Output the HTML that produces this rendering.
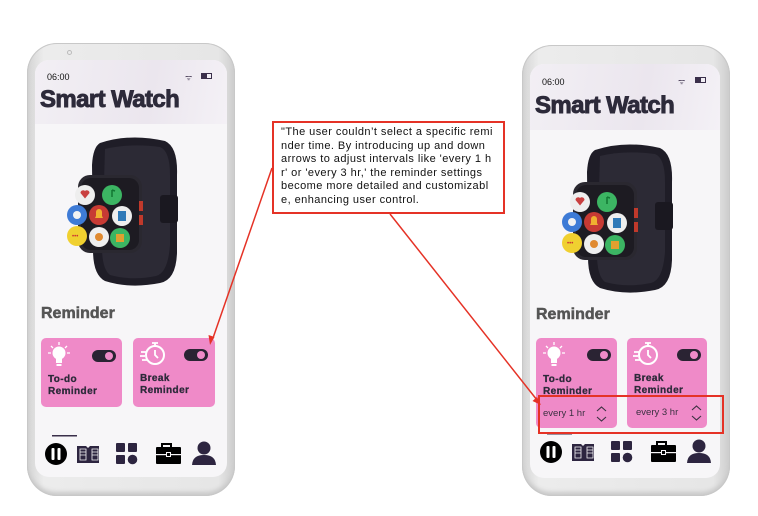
<!DOCTYPE html>
<html><head><meta charset="utf-8"><style>
*{margin:0;padding:0;box-sizing:border-box}
body{width:758px;height:516px;background:#fff;position:relative;overflow:hidden;font-family:"Liberation Sans",sans-serif}
.a{position:absolute}
.outer{border-radius:30px;background:linear-gradient(90deg,#d3d3d3,#ececec 8%,#e6e6e6 92%,#cdcdcd);box-shadow:inset 0 0 0 1px #c8c8c8,inset 0 -4px 4px #c9c9c9}
.screen{border-radius:14px;background:#f7f6f8;overflow:hidden}
.hdr{background:linear-gradient(100deg,#f2eff4,#ebe6ee 60%,#f4f1f6)}
.time{font-size:9px;color:#111}
.title{font-size:24px;font-weight:bold;color:#2d2a3a;letter-spacing:-0.6px;-webkit-text-stroke:0.9px #2d2a3a}
.rem{font-size:16px;font-weight:bold;color:#555;-webkit-text-stroke:0.5px #555}
.card{background:#ef8ac8;border-radius:5px}
.ct{font-size:10px;font-weight:bold;color:#2d2a3a;line-height:12px;letter-spacing:0.4px;-webkit-text-stroke:0.3px #2d2a3a}
.tog{width:24px;height:12px;border-radius:6px;background:#2a2333}
.tog:after{content:"";position:absolute;right:3px;top:2px;width:8px;height:8px;border-radius:50%;background:#ef8ac8}
.ev{font-size:9.5px;color:#3a3040}
.note{border:2px solid #e53226;background:#fff;font-family:"Liberation Sans",sans-serif;font-size:11px;letter-spacing:0.45px;line-height:13.6px;color:#111;padding:3px 0 0 7px;white-space:nowrap;overflow:hidden}
</style></head><body>
<svg width="0" height="0" style="position:absolute">
<defs>
<symbol id="watch" viewBox="0 0 130 155">
<path d="M40 8 Q70 -2 105 6 Q118 12 117 40 L117 118 Q116 145 100 148 Q70 154 45 146 Q33 140 33 115 L32 30 Q33 12 40 8Z" fill="#1f1d27"/>
<path d="M45 14 Q70 8 100 12 Q110 16 110 40 L110 110 Q108 138 96 141 Q72 146 50 140 Q42 134 42 112 Z" fill="#2c2a35"/>
<rect x="100" y="60" width="18" height="28" rx="3" fill="#1a1820"/>
<rect x="18" y="40" width="64" height="78" rx="12" fill="#2a2830"/>
<rect x="21" y="43" width="58" height="72" rx="10" fill="#1d1b22"/>
<rect x="79" y="66" width="4" height="10" fill="#c0392b"/><rect x="79" y="80" width="4" height="10" fill="#c0392b"/>
<circle cx="25" cy="60" r="10" fill="#eee"/><path d="M20.5 58a2.7 2.7 0 0 1 4.5-2a2.7 2.7 0 0 1 4.5 2l-4.5 5.5z" fill="#c94040"/>
<circle cx="52" cy="60" r="10" fill="#3cb563"/><path d="M52 55v7M52 55l3 1" stroke="#173" stroke-width="1.5" fill="none"/>
<circle cx="17" cy="80" r="10" fill="#3e7bd6"/><circle cx="17" cy="80" r="4" fill="#f2f2f2"/>
<circle cx="39" cy="80" r="10" fill="#c73a34"/><path d="M35 83h8l-1-2v-4a3 3 0 0 0-6 0v4z" fill="#f0b030"/>
<circle cx="62" cy="81" r="10" fill="#eee"/><rect x="58" y="76" width="8" height="10" fill="#2f7ab8"/>
<circle cx="17" cy="101" r="10" fill="#f0d030"/><text x="12" y="103" font-size="6" fill="#c33">•••</text>
<circle cx="39" cy="102" r="10" fill="#eee"/><circle cx="39" cy="102" r="4" fill="#e08a30"/>
<circle cx="60" cy="103" r="10" fill="#3cb563"/><rect x="56" y="99" width="8" height="8" fill="#e0a030"/>
</symbol>
<symbol id="nav" viewBox="0 0 190 30">
<rect x="17" y="0" width="25" height="1.5" fill="#3a2f4a"/>
<circle cx="21" cy="19" r="11" fill="#000"/><rect x="16.5" y="13" width="3" height="12" rx="1" fill="#fff"/><rect x="22.5" y="13" width="3" height="12" rx="1" fill="#fff"/>
<path d="M42 11h9l2 2 2-2h9v17h-22z" fill="#2d2540"/><path d="M45 14h6v11h-6zM57 14h6v11h-6z" fill="none" stroke="#f7f6f8" stroke-width="0.8"/><path d="M45 17h6M45 20h6M57 17h6M57 20h6" stroke="#f7f6f8" stroke-width="0.8"/>
<rect x="81" y="8" width="9" height="9" rx="1" fill="#2d2540"/><rect x="93" y="8" width="9" height="9" rx="1" fill="#2d2540"/><rect x="81" y="20" width="9" height="9" rx="1" fill="#2d2540"/><circle cx="97.5" cy="24.5" r="4.8" fill="#2d2540"/>
<path d="M127 12v-3h9v3" stroke="#000" stroke-width="2" fill="none"/><rect x="121" y="12" width="25" height="17" rx="1" fill="#000"/><rect x="121" y="19" width="25" height="1.2" fill="#f7f6f8"/><rect x="131" y="17" width="5" height="5" fill="#f7f6f8"/><rect x="132" y="18" width="3" height="3" fill="#000"/>
<circle cx="169" cy="13" r="6.5" fill="#2d2540"/><path d="M157 31q0-11 12-11q12 0 12 11z" fill="#2d2540"/>
</symbol>
<symbol id="bulb" viewBox="0 0 22 28"><circle cx="11" cy="12" r="6.5" fill="#fff"/><rect x="8" y="17" width="6" height="5" fill="#fff"/><rect x="8.5" y="23" width="5" height="2" fill="#fff"/><path d="M11 1v3M3 5l2 2M19 5l-2 2M0 12h3M19 12h3" stroke="#fff" stroke-width="1.3"/></symbol>
<symbol id="timer" viewBox="0 0 26 28"><circle cx="15" cy="15" r="9" fill="none" stroke="#fff" stroke-width="2"/><path d="M12 3h6M15 3v3M15 10v5l3 3M1 12h6M0 16h5M2 20h5" stroke="#fff" stroke-width="1.8" fill="none"/></symbol>
</defs></svg>

<!-- LEFT PHONE -->
<div class="a outer" style="left:27px;top:43px;width:208px;height:453px"></div>
<div class="a" style="left:67px;top:50px;width:5px;height:5px;border-radius:50%;border:1px solid #bbb"></div>
<div class="a screen" style="left:35px;top:60px;width:192px;height:417px">
 <div class="a hdr" style="left:0;top:0;width:192px;height:64px"></div>
</div>
<div class="a time" style="left:47px;top:72px">06:00</div>
<div class="a" style="left:185px;top:72px;font-size:8px;color:#3a2f4a">ᯤ</div>
<div class="a" style="left:201px;top:73px;width:11px;height:6px;border:1px solid #3a2f4a"><div style="width:5px;height:4px;background:#3a2f4a"></div></div>
<div class="a title" style="left:40px;top:86px">Smart Watch</div>
<svg class="a" style="left:60px;top:135px" width="130" height="155"><use href="#watch"/></svg>
<div class="a rem" style="left:41px;top:305px">Reminder</div>
<div class="a card" style="left:41px;top:338px;width:81px;height:69px"></div>
<div class="a card" style="left:133px;top:338px;width:82px;height:69px"></div>
<svg class="a" style="left:48px;top:341px" width="22" height="28"><use href="#bulb"/></svg>
<svg class="a" style="left:140px;top:340px" width="26" height="28"><use href="#timer"/></svg>
<div class="a tog" style="left:92px;top:350px"></div>
<div class="a tog" style="left:184px;top:349px"></div>
<div class="a ct" style="left:48px;top:374px">To-do<br>Reminder</div>
<div class="a ct" style="left:140px;top:373px">Break<br>Reminder</div>
<svg class="a" style="left:35px;top:434px" width="190" height="32" viewBox="0 0 190 30"><use href="#nav"/></svg>

<!-- RIGHT PHONE -->
<div class="a outer" style="left:522px;top:45px;width:208px;height:451px"></div>
<div class="a screen" style="left:530px;top:64px;width:190px;height:414px">
 <div class="a hdr" style="left:0;top:0;width:190px;height:66px"></div>
</div>
<div class="a time" style="left:542px;top:77px">06:00</div>
<div class="a" style="left:678px;top:76px;font-size:8px;color:#3a2f4a">ᯤ</div>
<div class="a" style="left:695px;top:77px;width:11px;height:6px;border:1px solid #3a2f4a"><div style="width:5px;height:4px;background:#3a2f4a"></div></div>
<div class="a title" style="left:535px;top:92px">Smart Watch</div>
<svg class="a" style="left:555px;top:142px" width="130" height="155"><use href="#watch"/></svg>
<div class="a rem" style="left:536px;top:306px">Reminder</div>
<div class="a card" style="left:536px;top:338px;width:81px;height:90px"></div>
<div class="a card" style="left:627px;top:338px;width:80px;height:90px"></div>
<svg class="a" style="left:543px;top:341px" width="22" height="28"><use href="#bulb"/></svg>
<svg class="a" style="left:633px;top:340px" width="26" height="28"><use href="#timer"/></svg>
<div class="a tog" style="left:587px;top:349px"></div>
<div class="a tog" style="left:677px;top:349px"></div>
<div class="a ct" style="left:543px;top:374px">To-do<br>Reminder</div>
<div class="a ct" style="left:634px;top:373px">Break<br>Reminder</div>
<div class="a ev" style="left:543px;top:408px">every 1 hr</div>
<div class="a ev" style="left:636px;top:407px">every 3 hr</div>
<svg class="a" style="left:596px;top:405px" width="11" height="18"><path d="M1 6l4.5-4 4.5 4M1 12l4.5 4 4.5-4" stroke="#3a3040" fill="none" stroke-width="1.1"/></svg>
<svg class="a" style="left:691px;top:404px" width="11" height="18"><path d="M1 6l4.5-4 4.5 4M1 12l4.5 4 4.5-4" stroke="#3a3040" fill="none" stroke-width="1.1"/></svg>
<svg class="a" style="left:530px;top:432px" width="190" height="32" viewBox="0 0 190 30"><use href="#nav"/></svg>
<div class="a" style="left:538px;top:395px;width:186px;height:39px;border:2px solid #e53226"></div>

<!-- ANNOTATION -->
<div class="a note" style="left:272px;top:121px;width:233px;height:93px">"The user couldn’t select a specific remi<br>nder time. By introducing up and down<br>arrows to adjust intervals like 'every 1 h<br>r' or 'every 3 hr,' the reminder settings<br>become more detailed and customizabl<br>e, enhancing user control.</div>
<svg class="a" style="left:0;top:0" width="758" height="516">
<path d="M272 168L213 338" stroke="#e53226" stroke-width="1.5"/>
<path d="M210 345l-1.5-10 6 2z" fill="#e53226"/>
<path d="M390 214L537 400" stroke="#e53226" stroke-width="1.5"/>
<path d="M541 405l-8.5-4 4.5-4z" fill="#e53226"/>
</svg>
</body></html>
